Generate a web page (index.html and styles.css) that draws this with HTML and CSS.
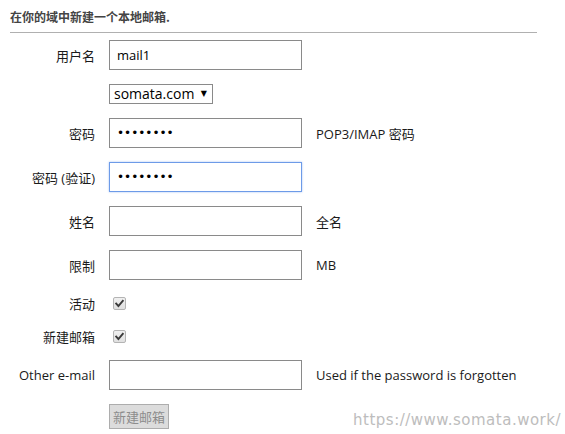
FILE: index.html
```html
<!DOCTYPE html>
<html lang="zh">
<head>
<meta charset="utf-8">
<title>新建邮箱</title>
<link rel="stylesheet" href="styles.css">
</head>
<body>
<div class="page">
  <p class="intro">在你的域中新建一个本地邮箱.</p>
  <hr class="rule">
  <form class="form">
    <label class="lbl" for="u">用户名</label>
    <input class="field" id="u" type="text" value="mail1">
    <span class="hint"></span>

    <span class="lbl"></span>
    <span class="select-wrap"><select class="select"><option>somata.com</option></select></span>
    <span class="hint"></span>

    <label class="lbl" for="p1">密码</label>
    <input class="field pw" id="p1" type="password" value="12345678">
    <span class="hint">POP3/IMAP 密码</span>

    <label class="lbl" for="p2">密码 (验证)</label>
    <input class="field pw focus" id="p2" type="password" value="12345678">
    <span class="hint"></span>

    <label class="lbl" for="n">姓名</label>
    <input class="field" id="n" type="text">
    <span class="hint">全名</span>

    <label class="lbl" for="q">限制</label>
    <input class="field" id="q" type="text">
    <span class="hint">MB</span>

    <span class="lbl">活动</span>
    <span class="check-cell"><span class="check" role="checkbox" aria-checked="true" aria-disabled="true"><svg viewBox="0 0 13 13" width="13" height="13"><path d="M3.2 6.6 L5.4 9 L9.8 3.8" fill="none" stroke="#3a3a3a" stroke-width="1.9" stroke-linecap="square"/></svg></span></span>
    <span class="hint"></span>

    <span class="lbl">新建邮箱</span>
    <span class="check-cell"><span class="check" role="checkbox" aria-checked="true" aria-disabled="true"><svg viewBox="0 0 13 13" width="13" height="13"><path d="M3.2 6.6 L5.4 9 L9.8 3.8" fill="none" stroke="#3a3a3a" stroke-width="1.9" stroke-linecap="square"/></svg></span></span>
    <span class="hint"></span>

    <label class="lbl" for="e">Other e-mail</label>
    <input class="field" id="e" type="text">
    <span class="hint">Used if the password is forgotten</span>

    <span class="lbl"></span>
    <span class="btn-cell"><button class="btn" type="button" disabled>新建邮箱</button></span>
    <span class="hint"></span>
  </form>
</div>
<div class="watermark">https://www.somata.work/</div>
</body>
</html>
```
FILE: styles.css
```css
html, body {
  margin: 0;
  padding: 0;
  background: #fff;
}
body {
  font-family: "Open Sans", "Noto Sans CJK SC", sans-serif;
  font-size: 13px;
  color: #1a1a1a;
  width: 565px;
  height: 434px;
  overflow: hidden;
  position: relative;
}
.page {
  padding: 9px 10px 0 10px;
  width: 527px;
}
.intro {
  margin: 0;
  font-family: "Noto Sans CJK SC", sans-serif;
  font-size: 12px;
  font-weight: bold;
  color: #444;
  line-height: 16px;
}
.rule {
  margin: 7px 0 0 0;
  border: 0;
  border-top: 1px solid #b0b0b0;
  height: 0;
}
.form {
  margin-top: 7px;
  display: grid;
  grid-template-columns: 85px 193px auto;
  column-gap: 14px;
  row-gap: 14px;
  align-items: center;
}
.lbl {
  text-align: right;
  white-space: nowrap;
  font-size: 13px;
  color: #1a1a1a;
}
.hint {
  white-space: nowrap;
  color: #1a1a1a;
}
.field {
  box-sizing: border-box;
  width: 193px;
  height: 30px;
  margin: 0;
  padding: 0 7px;
  border: 1px solid #8a8a8a;
  font-family: "Open Sans", sans-serif;
  font-size: 13px;
  color: #000;
  background: #fff;
  outline: none;
}
.field.pw {
  font-family: "DejaVu Sans", sans-serif;
  font-size: 12px;
}
.field.focus {
  border-color: #6d9be8;
  box-shadow: 0 0 2px 0 #a7c4f3;
}
.select-wrap {
  position: relative;
  display: block;
  width: 104px;
  height: 20px;
}
.select {
  appearance: none;
  -webkit-appearance: none;
  box-sizing: border-box;
  width: 104px;
  height: 20px;
  margin: 0;
  padding: 0 0 0 4px;
  border: 1px solid #8a8a8a;
  border-radius: 0;
  background: #fff;
  font-family: "Open Sans", sans-serif;
  font-size: 14px;
  line-height: 18px;
  color: #000;
}
.select-wrap::after {
  content: "▼";
  position: absolute;
  right: 6px;
  top: 5px;
  font-family: "DejaVu Sans", sans-serif;
  font-size: 8px;
  line-height: 10px;
  color: #000;
  pointer-events: none;
}
.check-cell {
  display: flex;
  height: 19px;
  align-items: center;
}
.check {
  box-sizing: border-box;
  display: block;
  width: 13px;
  height: 13px;
  margin: 3px 3px 3px 4px;
  border: 1px solid #b4b4b4;
  border-radius: 2px;
  background: linear-gradient(#f0f0f0, #e0e0e0);
  position: relative;
}
.check svg {
  display: block;
  position: absolute;
  left: -1px;
  top: -1px;
}
.btn-cell {
  display: block;
}
.btn {
  box-sizing: border-box;
  height: 25px;
  padding: 0 3px;
  margin: 0;
  border: 1px solid #adadad;
  background: #dcdcdc;
  color: #8d8d8d;
  font-family: "Noto Sans CJK SC", sans-serif;
  font-size: 13px;
  border-radius: 0;
}
.watermark {
  position: absolute;
  right: 4px;
  bottom: 5px;
  font-family: "DejaVu Sans", sans-serif;
  font-size: 15px;
  color: #bdbdbd;
  letter-spacing: 0.5px;
}
```
